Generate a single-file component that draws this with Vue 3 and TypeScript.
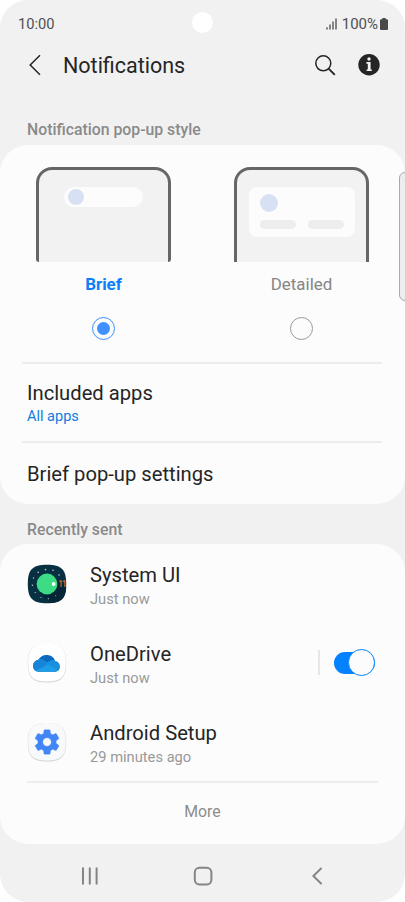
<script setup lang="ts">
import { ref } from 'vue'

type PopupStyle = 'brief' | 'detailed'

interface RecentApp {
  id: 'system' | 'onedrive' | 'setup'
  name: string
  time: string
  toggle: boolean
}

const selected = ref<PopupStyle>('brief')

const styles: { id: PopupStyle; label: string }[] = [
  { id: 'brief', label: 'Brief' },
  { id: 'detailed', label: 'Detailed' },
]

const apps: RecentApp[] = [
  { id: 'system', name: 'System UI', time: 'Just now', toggle: false },
  { id: 'onedrive', name: 'OneDrive', time: 'Just now', toggle: true },
  { id: 'setup', name: 'Android Setup', time: '29 minutes ago', toggle: false },
]
</script>

<template>
  <main class="phone">
    <div class="status">
      <span class="clock">10:00</span>
      <span class="indicators">
        <svg class="signal" width="11" height="12" viewBox="0 0 11 12">
          <path d="M1 9.2V11.5M4 6.5V11.5M7 3.5V11.5M10 .5V11.5" fill="none" stroke="#4a4a4a" stroke-width="1.3" />
        </svg>
        <span class="percent">100%</span>
        <svg class="battery" width="8" height="12" viewBox="0 0 8 12">
          <path d="M2.3 0h3.4v1.2H7q1 0 1 1V11q0 1-1 1H1q-1 0-1-1V2.2q0-1 1-1h1.3z" fill="#4a4a4a" />
        </svg>
      </span>
      <i class="camera"></i>
    </div>

    <header class="header">
      <svg class="back" width="14" height="22" viewBox="0 0 14 22">
        <path d="M12 1.2L2.2 11L12 20.8" fill="none" stroke="#252525" stroke-width="1.5" />
      </svg>
      <h1 class="title">Notifications</h1>
      <svg class="search" width="21" height="21" viewBox="0 0 21 21">
        <circle cx="8.3" cy="8.3" r="7.5" fill="none" stroke="#252525" stroke-width="1.5" />
        <path d="M13.6 13.6L19.8 19.8" stroke="#252525" stroke-width="1.9" />
      </svg>
      <svg class="info" width="22" height="22" viewBox="0 0 22 22">
        <circle cx="11" cy="10.7" r="10.7" fill="#252525" />
        <circle cx="11" cy="5" r="1.7" fill="#f1f1f1" />
        <path d="M8.4 8h4.2v7.4h1.2v1.7H8.6v-1.7h1.2V9.7H8.4z" fill="#f1f1f1" />
      </svg>
    </header>

    <h2 class="section first"><span>Notification pop-up style</span></h2>

    <section class="card options">
      <div class="choices">
        <div v-for="s in styles" :key="s.id" class="choice" :class="{ active: selected === s.id }" @click="selected = s.id">
          <div class="device" :class="s.id">
            <div v-if="s.id === 'brief'" class="pill"><i class="dot"></i></div>
            <div v-else class="popup">
              <i class="dot"></i>
              <div class="bars"><i></i><i></i></div>
            </div>
          </div>
          <span class="choice-label">{{ s.label }}</span>
          <i class="radio"></i>
        </div>
      </div>
      <div class="row included">
        <span class="row-title">Included apps</span>
        <span class="row-value">All apps</span>
      </div>
      <div class="row settings">
        <span class="row-title">Brief pop-up settings</span>
      </div>
    </section>

    <h2 class="section second"><span>Recently sent</span></h2>

    <section class="card recent">
      <div v-for="app in apps" :key="app.id" class="app">
        <svg v-if="app.id === 'system'" class="icon" width="40" height="40" viewBox="0 0 40 40">
          <path d="M20 .8C34.5.8 39.2 5.5 39.2 20S34.5 39.2 20 39.2.8 34.5.8 20 5.5.8 20 .8z" fill="#073042" />
          <path d="M12 28L23 39C34 39 39 34 39.2 23L27 12z" fill="#052636" />
          <circle cx="20" cy="20" r="10.4" fill="#3ddc84" />
          <circle cx="26.7" cy="20" r="1.9" fill="#fff" />
          <g fill="#b5cbd2">
            <circle cx="18.5" cy="5.6" r=".8" /><circle cx="26" cy="6.2" r=".8" />
            <circle cx="32" cy="11" r=".8" /><circle cx="11.2" cy="8.2" r=".8" />
            <circle cx="6.5" cy="14" r=".7" /><circle cx="5.4" cy="21.3" r=".8" />
            <circle cx="8.2" cy="28.6" r=".7" /><circle cx="14" cy="33.5" r=".6" />
            <circle cx="21.3" cy="34.7" r=".6" /><circle cx="28.7" cy="31.7" r=".5" />
          </g>
          <text x="31.2" y="23" font-size="8.2" font-weight="500" letter-spacing="-.9" fill="#f0672f">11</text>
        </svg>
        <svg v-else-if="app.id === 'onedrive'" class="icon" width="40" height="40" viewBox="0 0 40 40">
          <path d="M20 1.1C34.3 1.1 39.2 6 39.2 20.3S34.3 39.5 20 39.5.8 34.6.8 20.3 5.7 1.1 20 1.1z" fill="#d5d5d5" />
          <path d="M20 .8C34 .8 38.8 5.6 38.8 19.8S34 38.6 20 38.6 1.2 34 1.2 19.8 6 .8 20 .8z" fill="#fff" />
          <clipPath id="cloud">
            <path d="M12.5 28.8a5.9 5.9 0 0 1-1-12 9.2 9.2 0 0 1 16.7 1.4 5.4 5.4 0 0 1 .3 10.6z" />
          </clipPath>
          <g clip-path="url(#cloud)">
            <path d="M5 9h30v21H5z" fill="#0b68bd" />
            <path d="M5 15q8-1 14 3.5L24 22 6 29z" fill="#1684d8" />
            <path d="M18 21q6-5 13-4l5 12-10-2z" fill="#1790df" />
            <path d="M6 29l15-7.5L34 29z" fill="#209de7" />
          </g>
        </svg>
        <svg v-else class="icon" width="40" height="40" viewBox="0 0 40 40">
          <path d="M20 1.1C34.3 1.1 39.2 6 39.2 20.3S34.3 39.5 20 39.5.8 34.6.8 20.3 5.7 1.1 20 1.1z" fill="#d3d4d5" />
          <path d="M20 .9C34 .9 38.8 5.6 38.8 19.8S34 38.6 20 38.6 1.2 34 1.2 19.8 6 .9 20 .9z" fill="#f8f9fb" />
          <path
            transform="translate(5.4 5.4) scale(1.22)"
            fill="#4285f4"
            stroke="#4285f4"
            stroke-width=".3"
            d="M19.43 12.98c.04-.32.07-.64.07-.98s-.03-.66-.07-.98l2.11-1.65c.19-.15.24-.42.12-.64l-2-3.46c-.12-.22-.39-.3-.61-.22l-2.49 1c-.52-.4-1.08-.73-1.69-.98l-.38-2.65C14.46 2.18 14.25 2 14 2h-4c-.25 0-.46.18-.49.42l-.38 2.65c-.61.25-1.17.59-1.69.98l-2.49-1c-.23-.09-.49 0-.61.22l-2 3.46c-.13.22-.07.49.12.64l2.11 1.65c-.04.32-.07.65-.07.98s.03.66.07.98l-2.11 1.65c-.19.15-.24.42-.12.64l2 3.46c.12.22.39.3.61.22l2.49-1c.52.4 1.08.73 1.69.98l.38 2.65c.03.24.24.42.49.42h4c.25 0 .46-.18.49-.42l.38-2.65c.61-.25 1.17-.59 1.69-.98l2.49 1c.23.09.49 0 .61-.22l2-3.46c.12-.22.07-.49-.12-.64l-2.11-1.65zM12 15.5c-1.93 0-3.5-1.57-3.5-3.5s1.57-3.5 3.5-3.5 3.5 1.57 3.5 3.5-1.57 3.5-3.5 3.5z"
          />
        </svg>
        <div class="app-text">
          <span class="row-title">{{ app.name }}</span>
          <span class="app-time">{{ app.time }}</span>
        </div>
        <div v-if="app.toggle" class="switch-area">
          <i class="switch"></i>
        </div>
      </div>
      <div class="more">More</div>
    </section>

    <nav class="nav">
      <svg width="18" height="18" viewBox="0 0 18 18">
        <path d="M2 1.2v15.6M8.8 1.2v15.6M15.6 1.2v15.6" fill="none" stroke="#858585" stroke-width="2" stroke-linecap="round" />
      </svg>
      <svg class="home" width="20" height="20" viewBox="0 0 20 20">
        <rect x="1.8" y="1.8" width="16.6" height="16.6" rx="4.6" fill="none" stroke="#858585" stroke-width="2" />
      </svg>
      <svg width="12" height="18" viewBox="0 0 12 18">
        <path d="M10 1.5L2.4 9L10 16.5" fill="none" stroke="#858585" stroke-width="2" stroke-linecap="round" />
      </svg>
    </nav>
    <i class="edge"></i>
  </main>
</template>

<style>
body {
  background: #fff;
}
</style>

<style scoped>
* {
  box-sizing: border-box;
}
.phone {
  position: relative;
  display: flex;
  flex-direction: column;
  width: 405px;
  height: 902px;
  border-radius: 28px;
  overflow: hidden;
  background: #f1f1f1;
  font-family: Roboto, 'Liberation Sans', sans-serif;
  color: #252525;
  white-space: nowrap;
}
svg {
  display: block;
  flex: none;
}
.status {
  position: relative;
  display: flex;
  justify-content: space-between;
  align-items: center;
  height: 48px;
  padding: 0 17px 0 18px;
  font-size: 15px;
  line-height: 20px;
  color: #505050;
}
.clock {
  font-size: 14.7px;
}
.indicators {
  display: flex;
  align-items: center;
}
.percent {
  margin: 0 2px 0 5px;
}
.camera {
  position: absolute;
  left: 192px;
  top: 12px;
  width: 21px;
  height: 21px;
  border-radius: 50%;
  background: #fff;
}
.header {
  display: flex;
  align-items: center;
  height: 34px;
  padding: 0 25px 0 28px;
}
.title {
  flex: 1;
  margin: 0 0 0 21px;
  padding-top: 2px;
  font-size: 21.5px;
  font-weight: 400;
  line-height: 28px;
}
.search {
  margin-right: 22px;
}
.section {
  display: flex;
  align-items: center;
  flex: none;
  margin: 0;
  padding-left: 27px;
  font-size: 15.8px;
  font-weight: 500;
  line-height: 20px;
  color: #8a8a8a;
}
.first {
  height: 63px;
  padding-top: 33px;
}
.second {
  height: 40px;
  padding-top: 12px;
}
.card {
  flex: none;
  border-radius: 28px;
  background: #fcfcfc;
}
.options {
  height: 359px;
}
.choices {
  display: flex;
  justify-content: space-between;
  height: 219px;
  margin: 0 23px 0 22px;
  padding: 22px 13px 0 14px;
  border-bottom: 2px solid #ededed;
}
.choice {
  display: flex;
  flex-direction: column;
  align-items: center;
  width: 135px;
}
.device {
  display: flex;
  justify-content: center;
  align-items: flex-start;
  width: 135px;
  height: 95px;
  padding-top: 17px;
  border: 3.5px solid #666;
  border-bottom: 0;
  border-radius: 16px 16px 0 0;
  background: #f2f2f2;
}
.device.brief {
  border-radius: 16px 16px 3px 3px;
}
.pill {
  display: flex;
  align-items: center;
  width: 79px;
  height: 20px;
  padding-left: 3.5px;
  border-radius: 10px;
  background: #fcfcfc;
}
.dot {
  display: block;
  width: 16px;
  height: 16px;
  border-radius: 50%;
  background: #d8e1f3;
}
.popup {
  width: 106px;
  height: 50px;
  padding: 7px 11px;
  border-radius: 8px;
  background: #fcfcfc;
}
.popup .dot {
  width: 18px;
  height: 18px;
}
.bars {
  display: flex;
  justify-content: space-between;
  margin-top: 8px;
}
.bars i {
  width: 36px;
  height: 9px;
  border-radius: 5px;
  background: #ededed;
}
.choice-label {
  margin-top: 12px;
  font-size: 16.9px;
  line-height: 20px;
  color: #858585;
}
.active .choice-label {
  font-weight: 700;
  color: #0b80fb;
}
.radio {
  display: flex;
  justify-content: center;
  align-items: center;
  width: 23.4px;
  height: 23.4px;
  margin-top: 22.6px;
  border: 1.2px solid #999;
  border-radius: 50%;
}
.active .radio {
  border-color: #4190f8;
}
.active .radio::after {
  content: '';
  width: 13px;
  height: 13px;
  border-radius: 50%;
  background: #4190ff;
}
.row {
  display: flex;
  flex-direction: column;
  margin: 0 23px 0 22px;
  padding-left: 5px;
}
.included {
  height: 79px;
  padding-top: 16px;
  border-bottom: 2px solid #ededed;
}
.settings {
  padding-top: 18px;
}
.row-title {
  font-size: 20.2px;
  line-height: 26px;
}
.row-value {
  margin-top: 1px;
  font-size: 14.5px;
  line-height: 20px;
  color: #0f7ce0;
}
.recent {
  height: 300px;
}
.app {
  display: flex;
  align-items: center;
  height: 79px;
  padding: 0 30px 0 27px;
}
.app-text {
  display: flex;
  flex-direction: column;
  flex: 1;
  margin-left: 23px;
  padding-top: 3px;
}
.app-time {
  margin-top: 1px;
  font-size: 14.7px;
  line-height: 20px;
  color: #999;
}
.switch-area {
  display: flex;
  align-items: center;
  height: 25px;
  padding-left: 14px;
  border-left: 2px solid #e6e6e6;
}
.switch {
  display: flex;
  justify-content: flex-end;
  align-items: center;
  width: 41px;
  height: 22px;
  border-radius: 11px;
  background: #0381fe;
}
.switch::after {
  content: '';
  flex: none;
  width: 24.6px;
  height: 24.6px;
  border: 1px solid #0381fe;
  border-radius: 50%;
  background: #fcfcfc;
}
.more {
  height: 60px;
  margin: 0 27px;
  border-top: 2px solid #ededed;
  font-size: 15.8px;
  line-height: 58px;
  text-align: center;
  color: #8c8c8c;
}
.nav {
  display: flex;
  justify-content: space-between;
  align-items: center;
  height: 58px;
  padding: 5px 82px 0 81px;
}
.home {
  margin-right: 4px;
}
.edge {
  position: absolute;
  right: -7px;
  top: 172px;
  width: 13px;
  height: 129px;
  border: 1px solid #aaa;
  border-radius: 6px;
  background: #ededed;
}
</style>
